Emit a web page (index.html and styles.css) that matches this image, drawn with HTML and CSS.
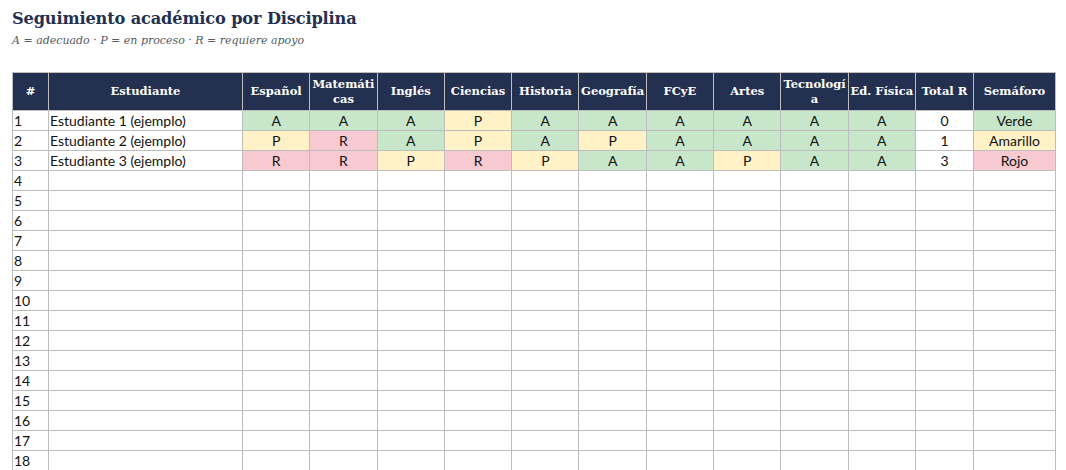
FILE: index.html
```html
<!DOCTYPE html>
<html lang="es">
<head>
<meta charset="utf-8">
<title>Seguimiento académico por Disciplina</title>
<link rel="stylesheet" href="styles.css">
</head>
<body>
<div class="page">
  <header class="head">
    <h1 class="title">Seguimiento académico por Disciplina</h1>
    <p class="subtitle">A = adecuado · P = en proceso · R = requiere apoyo</p>
  </header>
  <table class="grid">
    <colgroup>
      <col class="c-num"><col class="c-name">
      <col class="c-subj"><col class="c-subj"><col class="c-subj"><col class="c-subj"><col class="c-subj">
      <col class="c-subj"><col class="c-subj"><col class="c-subj"><col class="c-subj"><col class="c-subj">
      <col class="c-total"><col class="c-sem">
    </colgroup>
    <thead>
      <tr>
        <th>#</th><th>Estudiante</th><th>Español</th><th>Matemáticas</th><th>Inglés</th><th>Ciencias</th><th>Historia</th><th>Geografía</th><th>FCyE</th><th>Artes</th><th>Tecnología</th><th>Ed. Física</th><th>Total R</th><th>Semáforo</th>
      </tr>
    </thead>
    <tbody>
      <tr><td class="num">1</td><td class="name">Estudiante 1 (ejemplo)</td>
        <td class="a">A</td><td class="a">A</td><td class="a">A</td><td class="p">P</td><td class="a">A</td><td class="a">A</td><td class="a">A</td><td class="a">A</td><td class="a">A</td><td class="a">A</td><td class="c">0</td><td class="a">Verde</td></tr>
      <tr><td class="num">2</td><td class="name">Estudiante 2 (ejemplo)</td>
        <td class="p">P</td><td class="r">R</td><td class="a">A</td><td class="p">P</td><td class="a">A</td><td class="p">P</td><td class="a">A</td><td class="a">A</td><td class="a">A</td><td class="a">A</td><td class="c">1</td><td class="p">Amarillo</td></tr>
      <tr><td class="num">3</td><td class="name">Estudiante 3 (ejemplo)</td>
        <td class="r">R</td><td class="r">R</td><td class="p">P</td><td class="r">R</td><td class="p">P</td><td class="a">A</td><td class="a">A</td><td class="p">P</td><td class="a">A</td><td class="a">A</td><td class="c">3</td><td class="r">Rojo</td></tr>
      <tr><td class="num">4</td><td></td><td></td><td></td><td></td><td></td><td></td><td></td><td></td><td></td><td></td><td></td><td></td><td></td></tr>
      <tr><td class="num">5</td><td></td><td></td><td></td><td></td><td></td><td></td><td></td><td></td><td></td><td></td><td></td><td></td><td></td></tr>
      <tr><td class="num">6</td><td></td><td></td><td></td><td></td><td></td><td></td><td></td><td></td><td></td><td></td><td></td><td></td><td></td></tr>
      <tr><td class="num">7</td><td></td><td></td><td></td><td></td><td></td><td></td><td></td><td></td><td></td><td></td><td></td><td></td><td></td></tr>
      <tr><td class="num">8</td><td></td><td></td><td></td><td></td><td></td><td></td><td></td><td></td><td></td><td></td><td></td><td></td><td></td></tr>
      <tr><td class="num">9</td><td></td><td></td><td></td><td></td><td></td><td></td><td></td><td></td><td></td><td></td><td></td><td></td><td></td></tr>
      <tr><td class="num">10</td><td></td><td></td><td></td><td></td><td></td><td></td><td></td><td></td><td></td><td></td><td></td><td></td><td></td></tr>
      <tr><td class="num">11</td><td></td><td></td><td></td><td></td><td></td><td></td><td></td><td></td><td></td><td></td><td></td><td></td><td></td></tr>
      <tr><td class="num">12</td><td></td><td></td><td></td><td></td><td></td><td></td><td></td><td></td><td></td><td></td><td></td><td></td><td></td></tr>
      <tr><td class="num">13</td><td></td><td></td><td></td><td></td><td></td><td></td><td></td><td></td><td></td><td></td><td></td><td></td><td></td></tr>
      <tr><td class="num">14</td><td></td><td></td><td></td><td></td><td></td><td></td><td></td><td></td><td></td><td></td><td></td><td></td><td></td></tr>
      <tr><td class="num">15</td><td></td><td></td><td></td><td></td><td></td><td></td><td></td><td></td><td></td><td></td><td></td><td></td><td></td></tr>
      <tr><td class="num">16</td><td></td><td></td><td></td><td></td><td></td><td></td><td></td><td></td><td></td><td></td><td></td><td></td><td></td></tr>
      <tr><td class="num">17</td><td></td><td></td><td></td><td></td><td></td><td></td><td></td><td></td><td></td><td></td><td></td><td></td><td></td></tr>
      <tr><td class="num">18</td><td></td><td></td><td></td><td></td><td></td><td></td><td></td><td></td><td></td><td></td><td></td><td></td><td></td></tr>
    </tbody>
  </table>
</div>
</body>
</html>
```
FILE: styles.css
```css
html, body {
  margin: 0;
  padding: 0;
  background: #ffffff;
  overflow: hidden;
}

.page {
  padding: 8px 12px 0 12px;
}

.head {
  height: 64px;
}

.title {
  margin: 0;
  font-family: "DejaVu Serif", "Liberation Serif", serif;
  font-weight: bold;
  font-size: 16.2px;
  line-height: 22px;
  color: #23304f;
  letter-spacing: -0.15px;
}

.subtitle {
  margin: 4px 0 0 0;
  font-family: "DejaVu Serif", "Liberation Serif", serif;
  font-style: italic;
  font-size: 11px;
  line-height: 14px;
  color: #555b63;
}

.grid {
  border-collapse: collapse;
  table-layout: fixed;
  width: 1043px;
  font-family: Lato, "Liberation Sans", sans-serif;
  font-size: 14px;
  color: #111;
}

.c-num { width: 36px; }
.c-name { width: 194px; }
.c-subj { width: 67.3px; }
.c-total { width: 58px; }
.c-sem { width: 82px; }

.grid th,
.grid td {
  border: 1px solid #bdbdbd;
  padding: 0 1px;
}

.grid th {
  background: #23304f;
  color: #ffffff;
  font-family: "DejaVu Serif", "Liberation Serif", serif;
  font-weight: bold;
  font-size: 11.5px;
  line-height: 15px;
  height: 37px;
  text-align: center;
  overflow-wrap: anywhere;
}

.grid td {
  height: 19px;
  line-height: 17px;
  text-align: center;
  white-space: nowrap;
  overflow: hidden;
}

.grid td.num,
.grid td.name {
  text-align: left;
}

.a { background: #c7e6ca; }
.p { background: #fff2c7; }
.r { background: #f7c9d0; }
.c { background: #ffffff; }
```
